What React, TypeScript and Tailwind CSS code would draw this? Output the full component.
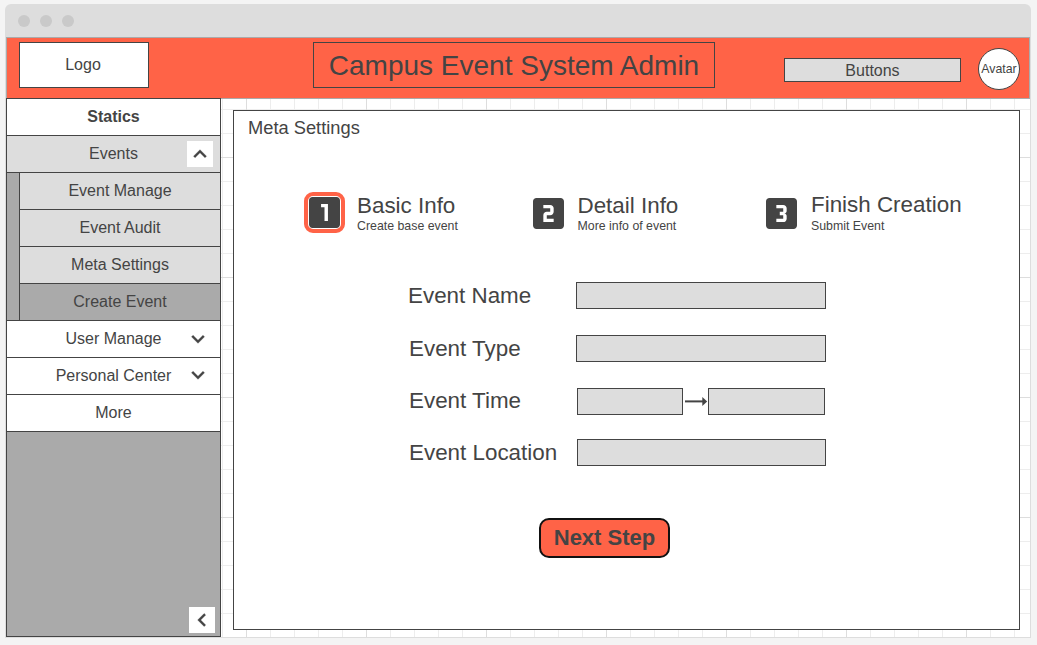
import type { ReactNode } from "react";

const BOX = "M19 3H5c-1.1 0-2 .9-2 2v14c0 1.1.9 2 2 2h14c1.1 0 2-.9 2-2V5c0-1.1-.9-2-2-2z";
const DIGITS = [
  "m-5 14h-2V9h-2V7h4v10z",
  "m-4 8c0 1.11-.9 2-2 2h-2v2h4v2H9v-4c0-1.11.9-2 2-2h2V9H9V7h4c1.1 0 2 .89 2 2v2z",
  "m-4 7.5c0 .83-.67 1.5-1.5 1.5.83 0 1.5.67 1.5 1.5V15c0 1.11-.9 2-2 2H9v-2h4v-2h-2v-2h2V9H9V7h4c1.1 0 2 .89 2 2v1.5z",
];

const CHEVRONS = {
  up: "M12 8l-6 6 1.41 1.41L12 10.83l4.59 4.58L18 14z",
  down: "M16.59 8.59L12 13.17 7.41 8.59 6 10l6 6 6-6z",
  left: "M15.41 7.41L14 6l-6 6 6 6 1.41-1.41L10.83 12z",
};

function StepIcon({ index }: { index: number }) {
  return (
    <svg viewBox="3 3 18 18" className="block size-[31px] fill-[#444]">
      <path d={BOX + DIGITS[index]} />
    </svg>
  );
}

function Chevron({ direction }: { direction: keyof typeof CHEVRONS }) {
  return (
    <svg viewBox="0 0 24 24" className="block size-[26px] fill-[#444] stroke-[#444] stroke-[0.3]">
      <path d={CHEVRONS[direction]} />
    </svg>
  );
}

function MenuRow({ label, className, icon }: { label: string; className: string; icon?: ReactNode }) {
  return (
    <div className={`grid h-[37px] grid-cols-[1fr] items-center border-b border-[#444] ${className}`}>
      <span className="col-start-1 row-start-1 text-center leading-[18px]">{label}</span>
      {icon && <span className="col-start-1 row-start-1 justify-self-end">{icon}</span>}
    </div>
  );
}

function Sidebar() {
  return (
    <nav className="flex w-[215px] shrink-0 flex-col border border-[#444] bg-[#aaa]">
      <MenuRow label="Statics" className="bg-white font-bold" />
      <MenuRow
        label="Events"
        className="bg-[#ddd]"
        icon={<span className="mr-[7px] block bg-white"><Chevron direction="up" /></span>}
      />
      <div className="flex">
        <div className="w-3 border-b border-[#444]" />
        <div className="flex-1 border-l border-[#444]">
          <MenuRow label="Event Manage" className="bg-[#ddd]" />
          <MenuRow label="Event Audit" className="bg-[#ddd]" />
          <MenuRow label="Meta Settings" className="bg-[#ddd]" />
          <MenuRow label="Create Event" className="bg-[#aaa]" />
        </div>
      </div>
      <MenuRow
        label="User Manage"
        className="bg-white"
        icon={<span className="mr-[9px] block"><Chevron direction="down" /></span>}
      />
      <MenuRow
        label="Personal Center"
        className="bg-white"
        icon={<span className="mr-[9px] mb-[2px] block"><Chevron direction="down" /></span>}
      />
      <MenuRow label="More" className="bg-white" />
      <div className="mt-auto mr-[5px] mb-[3px] self-end bg-white">
        <Chevron direction="left" />
      </div>
    </nav>
  );
}

function Step({ index, title, note, className, active }: { index: number; title: string; note: string; className: string; active?: boolean }) {
  return (
    <div className={`flex shrink-0 items-start ${className}`}>
      <div className={active ? "rounded-[9px] border-4 border-[#ff6347] p-px" : "mt-[6px]"}>
        <StepIcon index={index} />
      </div>
      <div className={active ? "ml-3" : "ml-[14px]"}>
        <div className={`text-[22.4px] leading-[26px] whitespace-nowrap ${index === 2 ? "mb-px" : "mt-px"}`}>{title}</div>
        <div className="text-[12.35px] leading-[14px] whitespace-nowrap">{note}</div>
      </div>
    </div>
  );
}

function Field({ label, className, children }: { label: string; className: string; children: ReactNode }) {
  return (
    <div className={`flex h-[27px] items-center ${className}`}>
      <span className="w-[168px] shrink-0 text-[22.4px] leading-[27px] whitespace-nowrap">{label}</span>
      {children}
    </div>
  );
}

const INPUT = "h-[27px] border border-[#444] bg-[#ddd]";

function MetaSettings() {
  return (
    <main className="mt-[11px] ml-3 flex h-[520px] w-[787px] shrink-0 flex-col border border-[#444] bg-white">
      <h2 className="mt-[7px] ml-[14px] text-[18.3px] leading-5">Meta Settings</h2>
      <div className="mt-[54px] ml-[70px] flex h-[41px]">
        <Step index={0} title="Basic Info" note="Create base event" className="w-[228.5px]" active />
        <Step index={1} title="Detail Info" note="More info of event" className="w-[233.5px]" />
        <Step index={2} title="Finish Creation" note="Submit Event" className="" />
      </div>
      <form className="mt-[49px] ml-[174px] flex flex-col">
        <Field label="Event Name" className="">
          <div className={`${INPUT} w-[250px]`} />
        </Field>
        <Field label="Event Type" className="mt-[26px] [&>span]:pl-px">
          <div className={`${INPUT} w-[250px]`} />
        </Field>
        <Field label="Event Time" className="mt-[26px] ml-px [&>span]:pb-[2px]">
          <div className={`${INPUT} w-[106px]`} />
          <svg viewBox="0 0 25 27" className="h-[27px] w-[25px]">
            <path d="M2 13.4H20" stroke="#444" strokeWidth="2" />
            <path d="M19.3 8.9L24.2 13.4L19.3 17.9Z" fill="#444" />
          </svg>
          <div className={`${INPUT} w-[117px]`} />
        </Field>
        <Field label="Event Location" className="mt-[24px] ml-px">
          <div className={`${INPUT} w-[249px]`} />
        </Field>
        <button
          type="button"
          className="mt-[52px] ml-[131px] flex h-10 w-[131px] items-center justify-center rounded-[10px] border-2 border-[#111] bg-[#ff6347] text-[22px] leading-6 font-bold"
        >
          Next Step
        </button>
      </form>
    </main>
  );
}

export default function App() {
  return (
    <div className="h-[645px] w-[1037px] overflow-hidden bg-[#f4f4f4] pt-1 pl-[5px] font-['Liberation_Sans',Arial,sans-serif] text-base text-[#444]">
      <div className="w-[1026px]">
        <div className="flex h-[33px] items-center gap-[10px] rounded-t-[6px] bg-[#ddd] pl-[13px]">
          <span className="size-3 rounded-full bg-[#c9c9c9]" />
          <span className="size-3 rounded-full bg-[#c9c9c9]" />
          <span className="size-3 rounded-full bg-[#c9c9c9]" />
        </div>
        <div className="h-[601px] border-r border-b border-l border-[#ddd] bg-white">
          <header className="flex h-[62px] w-[1024px] items-start border border-[#aaa] bg-[#ff6347]">
            <div className="mt-1 ml-3 flex h-[46px] w-[130px] items-center justify-center border border-[#444] bg-white pr-[2px]">
              Logo
            </div>
            <h1 className="mt-1 ml-[164px] flex h-[46px] w-[402px] items-center justify-center border border-[#444] pt-[2px] text-[28px] whitespace-nowrap">
              Campus Event System Admin
            </h1>
            <div className="mt-5 ml-[69px] flex h-6 w-[177px] items-center justify-center border border-[#444] bg-[#ddd] pt-[2px]">
              Buttons
            </div>
            <div className="mt-[10px] ml-[17px] flex size-[42px] items-center justify-center rounded-full border border-[#444] bg-white text-[12.35px]">
              Avatar
            </div>
          </header>
          <div className="-mt-px flex h-[539px] w-[1024px] bg-[linear-gradient(to_right,#ddd_1px,transparent_1px),linear-gradient(to_bottom,#ddd_1px,transparent_1px),linear-gradient(to_right,#ededed_1px,transparent_1px),linear-gradient(to_bottom,#ededed_1px,transparent_1px)] bg-[size:120px_120px,120px_120px,24px_24px,24px_24px] bg-[position:0px_58px,0px_58px,0px_10px,0px_10px] [border-top:1px_solid_#aaa] [background-clip:padding-box]">
            <div className="-mt-px flex">
              <Sidebar />
            </div>
            <MetaSettings />
          </div>
        </div>
      </div>
    </div>
  );
}
